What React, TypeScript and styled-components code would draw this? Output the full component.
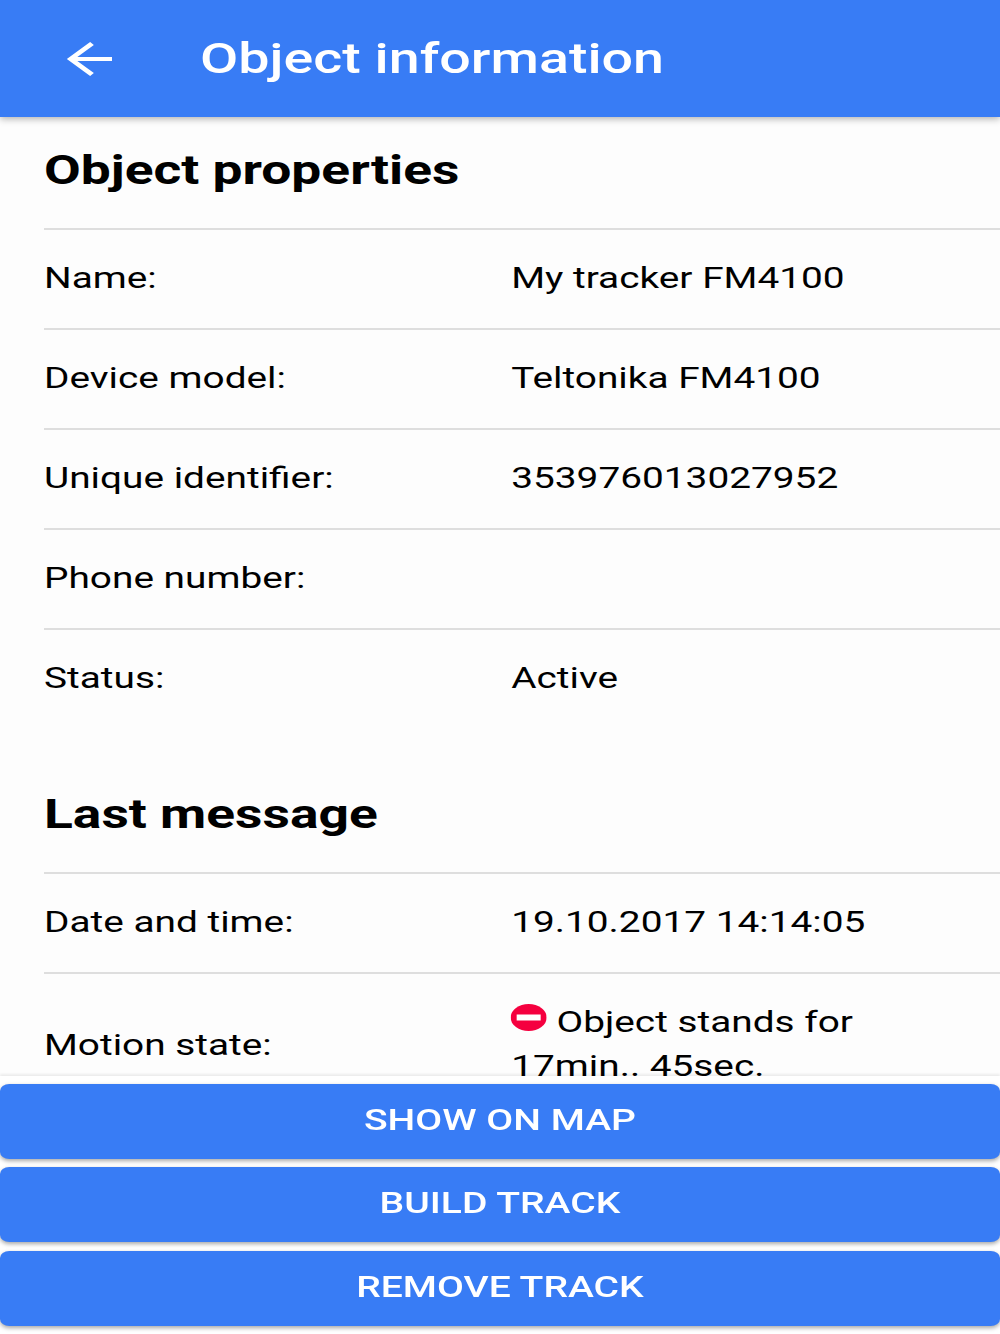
import React from 'react';
import styled, {createGlobalStyle} from 'styled-components';

const primary = '#387cf5';

const GlobalStyle = createGlobalStyle`
  html, body {
    margin: 0;
    padding: 0;
    width: 1000px;
    height: 1334px;
    overflow: hidden;
    background: #fdfdfd;
  }
  * {
    box-sizing: border-box;
  }
`;

// the phone capture is 750 wide, stretched to fill the 1000 wide picture
const Screen = styled.div`
  width: 750px;
  height: 1334px;
  transform: scaleX(1.33333);
  transform-origin: top left;
  display: flex;
  flex-direction: column;
  font-family: Roboto, 'Liberation Sans', sans-serif;
  color: #000;
  background: #fdfdfd;
`;

const Header = styled.header`
  flex: 0 0 117px;
  display: flex;
  align-items: center;
  padding-left: 50px;
  gap: 66px;
  background: ${primary};
  box-shadow: 0 2px 6px rgba(0, 0, 0, 0.3);
  position: relative;
  z-index: 2;
`;

const BackIcon = styled.svg`
  width: 34px;
  height: 34px;
  flex: none;
`;

const HeaderTitle = styled.h1`
  margin: 0;
  font-size: 41.7px;
  font-weight: 500;
  color: #fff;
`;

const Content = styled.main`
  flex: 1;
  min-height: 0;
  overflow: hidden;
  padding-left: 33px;
`;

const SectionTitle = styled.h2<{$first?: boolean}>`
  margin: 0;
  height: ${({$first}) => ($first ? '111px' : '144px')};
  padding-bottom: ${({$first}) => ($first ? '4px' : '0')};
  padding-top: ${({$first}) => ($first ? '0' : '28px')};
  display: flex;
  align-items: center;
  font-size: 40px;
  font-weight: 700;
`;

const Row = styled.div`
  display: grid;
  grid-template-columns: 350.4px 1fr;
  align-items: center;
  min-height: 100px;
  border-top: 2px solid #dedede;
  padding-bottom: 2px;
  font-size: 29.1px;
`;

const Label = styled.span``;

const Value = styled.span<{$wrap?: boolean}>`
  line-height: ${({$wrap}) => ($wrap ? '44px' : 'normal')};
  padding: ${({$wrap}) => ($wrap ? '26px 60px 28px 0' : '0')};
`;

const StopIcon = styled.svg`
  width: 27px;
  height: 27px;
  vertical-align: 1px;
  margin-right: 7px;
`;

const Footer = styled.footer`
  flex: none;
  display: flex;
  flex-direction: column;
  gap: 8.5px;
  padding: 8px 0 8.1px;
  background: #fff;
  box-shadow: 0 -2px 2px rgba(0, 0, 0, 0.07);
  position: relative;
  z-index: 2;
`;

const ActionButton = styled.button`
  height: 75px;
  border: 0;
  border-radius: 7px;
  padding: 0 0 3px;
  background: ${primary};
  color: #fff;
  font-family: inherit;
  font-size: 29.3px;
  font-weight: 500;
  box-shadow: 0 2px 4px rgba(0, 0, 0, 0.35);
`;

const properties = [
  ['Name:', 'My tracker FM4100'],
  ['Device model:', 'Teltonika FM4100'],
  ['Unique identifier:', '353976013027952'],
  ['Phone number:', ''],
  ['Status:', 'Active'],
];

export default function App() {
  return (
    <Screen>
      <GlobalStyle />
      <Header>
        <BackIcon viewBox="0 0 34 34" fill="none" stroke="#fff" strokeWidth="4">
          <path d="M34 17H3M19 1.5 3 17l16 15.5" />
        </BackIcon>
        <HeaderTitle>Object information</HeaderTitle>
      </Header>
      <Content>
        <SectionTitle $first>Object properties</SectionTitle>
        {properties.map(([label, value]) => (
          <Row key={label}>
            <Label>{label}</Label>
            <Value>{value}</Value>
          </Row>
        ))}
        <SectionTitle>Last message</SectionTitle>
        <Row>
          <Label>Date and time:</Label>
          <Value>19.10.2017 14:14:05</Value>
        </Row>
        <Row>
          <Label>Motion state:</Label>
          <Value $wrap>
            <StopIcon viewBox="0 0 27 27">
              <circle cx="13.5" cy="13.5" r="13.5" fill="#f5003f" />
              <rect x="4.5" y="10.5" width="18" height="6" fill="#fff" />
            </StopIcon>
            Object stands for 17min.. 45sec.
          </Value>
        </Row>
      </Content>
      <Footer>
        <ActionButton>SHOW ON MAP</ActionButton>
        <ActionButton>BUILD TRACK</ActionButton>
        <ActionButton>REMOVE TRACK</ActionButton>
      </Footer>
    </Screen>
  );
}
